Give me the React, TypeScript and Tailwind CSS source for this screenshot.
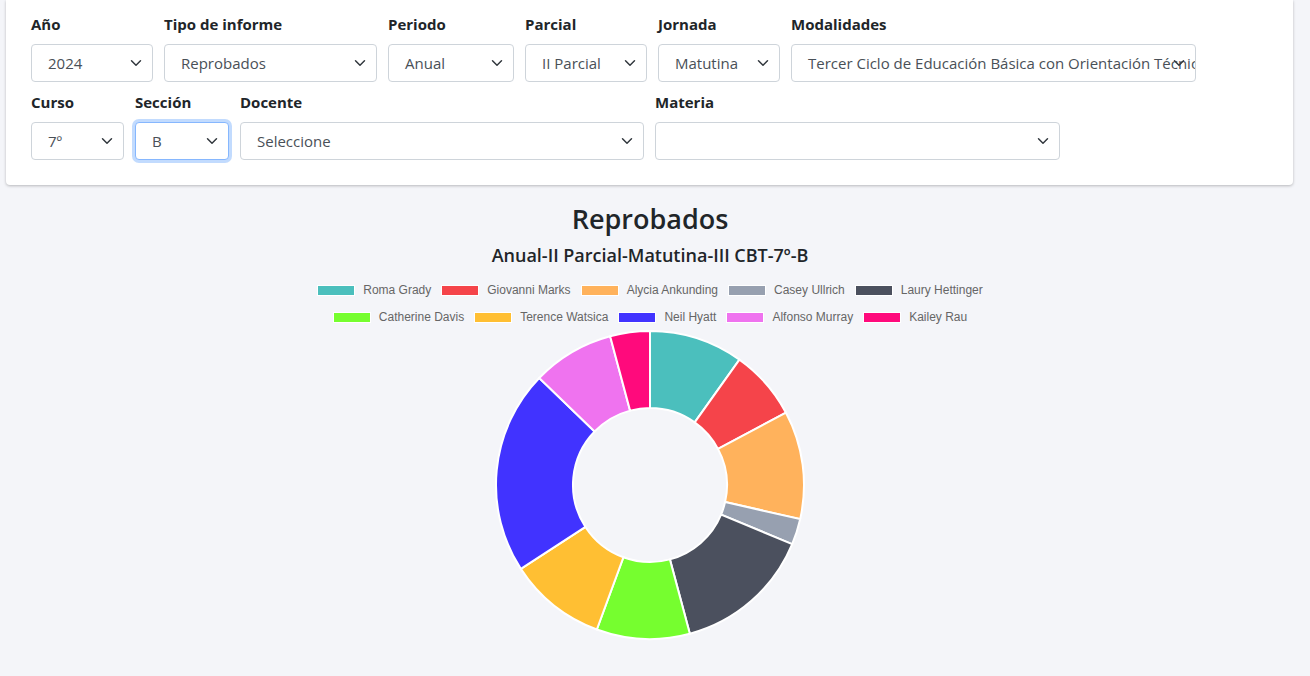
import React from "react";

const Chevron = () => (
  <svg className="absolute right-[10px] top-1/2 -translate-y-1/2 pointer-events-none" width="12" height="12" viewBox="0 0 16 16">
    <path d="M2 5l6 6 6-6" fill="none" stroke="#343a40" strokeWidth="2" strokeLinecap="round" strokeLinejoin="round" />
  </svg>
);

function Field({ label, value, w, focus }: { label: string; value: string; w: string; focus?: boolean }) {
  return (
    <div className={`flex flex-col ${w}`}>
      <div className="h-[20px] text-[15px] font-bold text-[#212529] leading-[20px] mb-[10px]">{label}</div>
      <div
        className={`relative h-[38px] rounded-[4px] bg-white border ${focus ? "border-[#86b7fe] shadow-[0_0_0_3px_rgba(13,110,253,0.25)]" : "border-[#ced4da]"} flex items-center pl-[16px] text-[15px] text-[#495057] whitespace-nowrap overflow-hidden pr-[30px]`}
      >
        {value}
        <Chevron />
      </div>
    </div>
  );
}

const slices = [
  { name: "Roma Grady", color: "#4bbfbd", end: 35.5 },
  { name: "Giovanni Marks", color: "#f5444a", end: 62 },
  { name: "Alycia Ankunding", color: "#ffb25c", end: 102.8 },
  { name: "Casey Ullrich", color: "#97a0b0", end: 112.6 },
  { name: "Laury Hettinger", color: "#4b505e", end: 165 },
  { name: "Catherine Davis", color: "#76fe2f", end: 200.2 },
  { name: "Terence Watsica", color: "#ffbf33", end: 237 },
  { name: "Neil Hyatt", color: "#4133ff", end: 314 },
  { name: "Alfonso Murray", color: "#ef73ef", end: 345 },
  { name: "Kailey Rau", color: "#ff0a7c", end: 360 },
];

function pt(cx: number, cy: number, r: number, a: number) {
  const t = (a * Math.PI) / 180;
  return [cx + r * Math.sin(t), cy - r * Math.cos(t)];
}

function Donut() {
  const R = 154, r = 77, c = 156;
  let start = 0;
  return (
    <svg width="312" height="312" viewBox="0 0 312 312">
      {slices.map((s) => {
        const a0 = start, a1 = s.end;
        start = s.end;
        const large = a1 - a0 > 180 ? 1 : 0;
        const [x0, y0] = pt(c, c, R, a0);
        const [x1, y1] = pt(c, c, R, a1);
        const [x2, y2] = pt(c, c, r, a1);
        const [x3, y3] = pt(c, c, r, a0);
        const d = `M${x0} ${y0} A${R} ${R} 0 ${large} 1 ${x1} ${y1} L${x2} ${y2} A${r} ${r} 0 ${large} 0 ${x3} ${y3} Z`;
        return <path key={s.name} d={d} fill={s.color} stroke="#fff" strokeWidth="2" />;
      })}
    </svg>
  );
}

function Legend({ items }: { items: typeof slices }) {
  return (
    <div className="flex justify-center gap-[10px]">
      {items.map((s) => (
        <div key={s.name} className="flex items-center gap-[8px]">
          <span className="w-[38px] h-[11px] border border-white" style={{ background: s.color }} />
          <span className="text-[12px] text-[#666]" style={{ fontFamily: "'Liberation Sans', Arial, sans-serif" }}>{s.name}</span>
        </div>
      ))}
    </div>
  );
}

export default function App() {
  return (
    <div className="w-[1310px] h-[676px] bg-[#f4f5f9] overflow-hidden" style={{ fontFamily: "'Open Sans', 'Noto Sans', sans-serif" }}>
      <div className="mx-[6px] w-[1287px] h-[185px] bg-white rounded-b-[4px] shadow-[0_1px_3px_rgba(0,0,0,0.25)] pl-[25px] pt-[14px]">
        <div className="flex gap-[11px]">
          <Field label="Año" value="2024" w="w-[122px]" />
          <Field label="Tipo de informe" value="Reprobados" w="w-[213px]" />
          <Field label="Periodo" value="Anual" w="w-[126px]" />
          <Field label="Parcial" value="II Parcial" w="w-[122px]" />
          <Field label="Jornada" value="Matutina" w="w-[122px]" />
          <Field label="Modalidades" value="Tercer Ciclo de Educación Básica con Orientación Técnica" w="w-[405px]" />
        </div>
        <div className="flex gap-[11px] mt-[10px]">
          <Field label="Curso" value="7º" w="w-[93px]" />
          <Field label="Sección" value="B" w="w-[94px]" focus />
          <Field label="Docente" value="Seleccione" w="w-[404px]" />
          <Field label="Materia" value="" w="w-[405px]" />
        </div>
      </div>
      <div className="flex flex-col items-center pr-[10px]">
        <div className="mt-[16px] text-[27px] text-[#212529] leading-[36px] font-semibold">Reprobados</div>
        <div className="mt-[6px] text-[18px] text-[#212529] leading-[24px] font-semibold">Anual-II Parcial-Matutina-III CBT-7º-B</div>
        <div className="mt-[14px] flex flex-col gap-[9px]">
          <Legend items={slices.slice(0, 5)} />
          <Legend items={slices.slice(5)} />
        </div>
        <div className="mt-[3px]">
          <Donut />
        </div>
      </div>
    </div>
  );
}
